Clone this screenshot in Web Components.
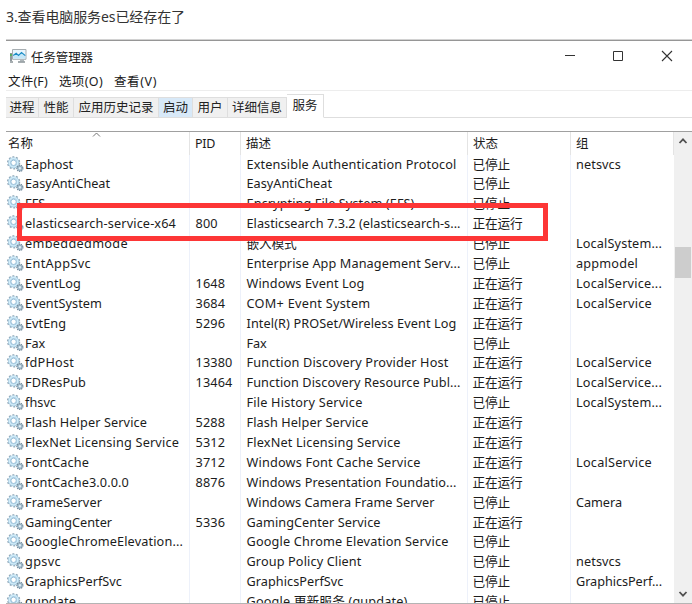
<!DOCTYPE html>
<html lang="zh-CN">
<head>
<meta charset="utf-8">
<title>任务管理器</title>
<style>
html,body{margin:0;height:604px;overflow:hidden;background:#fff}
body{font-family:"Noto Sans","Noto Sans CJK SC",sans-serif;font-size:12.7px;color:#1c1c1c}
</style>
</head>
<body>
<task-page></task-page>
<script>
const define = (name, html, setup) => {
  customElements.define(name, class extends HTMLElement {
    constructor() {
      super();
      this.attachShadow({ mode: 'open' }).innerHTML = html;
    }
    connectedCallback() { if (setup) setup(this, this.shadowRoot); }
  });
};

/* A single line of text spaced out to the width given in its w attribute. */
define('fit-text', `<style>:host{display:inline-block;white-space:pre}span{display:inline-block;white-space:pre}</style><span></span>`, (el, root) => {
  const s = root.querySelector('span'), t = el.getAttribute('text'), w = +el.getAttribute('w');
  s.textContent = t;
  if (w && t.length) {
    const d = (w - s.getBoundingClientRect().width) / t.length;
    s.style.letterSpacing = d.toFixed(3) + 'px';
  }
});

define('gear-icon', `<style>:host{display:block;width:18px;height:18px;flex:none;padding-top:1px}svg{display:block}</style>
<svg width="18" height="18" viewBox="0 0 18 18" fill="none">
<circle cx="6.6" cy="6.8" r="5.9" stroke="#91a8b8" stroke-width="1.5" stroke-dasharray="1.9 1.8"/>
<circle cx="6.6" cy="6.8" r="4.3" stroke="#a3c6dc" stroke-width="2.6"/>
<circle cx="6.6" cy="6.8" r="4.2" stroke="#d0ecf9" stroke-width="1.5"/>
<circle cx="6.6" cy="6.8" r="2.7" fill="#fff" stroke="#7eb0d0" stroke-width=".8"/>
<circle cx="12.9" cy="12.3" r="2.9" stroke="#71899b" stroke-width="1.5" stroke-dasharray="1.3 .7"/>
<circle cx="12.9" cy="12.3" r="2.1" fill="#c4dbe8" stroke="#8fabbd" stroke-width="1.1"/>
<circle cx="12.9" cy="12.3" r=".8" fill="#f4fafd"/>
</svg>`);

define('title-bar', `<style>
:host{display:flex;height:30px;align-items:center;padding-left:4px;font-size:12.5px}
.app{margin-right:4px}fit-text{flex:1}svg{display:block}
.b{width:48.5px;display:flex;justify-content:center;position:relative;left:-1px}
</style>
<svg class="app" width="17" height="16" viewBox="0 0 17 16" fill="none">
<path d="M0 5h2v8H0z" fill="#8f999d"/><path d="M.2 6h1.5v2H.2z" fill="#45b749"/>
<path d="M2.5 1.5h13.5v9.8H2.5z" fill="#e8f6fd" stroke="#a6adb1"/>
<path d="M3.2 7.6l3-2 2.3 2 3-3 3.8 3.2v2.8H3.2z" fill="#c4e7f8"/>
<path d="M3.2 7.5L6.2 5.3l2.3 2.2 3-3 3.8 3.2" stroke="#198bc5" stroke-width="1.1"/>
<path d="M10 11.5h4v2h-4z" fill="#afb7ba"/><path d="M8 14h7M0 14h3" stroke="#8b9498" stroke-width="1.3"/>
</svg><fit-text text="任务管理器" w="62"></fit-text>
<div class="b"><svg width="12" height="12"><path d="M1 5.5h10" stroke="#333" fill="none"/></svg></div>
<div class="b"><svg width="12" height="12"><path d="M1.5 1.5h9v9h-9z" stroke="#333" fill="none"/></svg></div>
<div class="b"><svg width="12" height="12"><path d="M1 1l10 10M11 1L1 11" stroke="#333" stroke-width="1.1" fill="none"/></svg></div>`);

define('menu-bar', `<style>:host{display:flex;height:19px;line-height:21px;padding-left:2px;gap:11px;font-size:12.5px;border-bottom:1px solid #ededed}</style>
<fit-text text="文件(F)" w="40"></fit-text><fit-text text="选项(O)" w="44"></fit-text><fit-text text="查看(V)" w="43"></fit-text>`);

define('tab-item', `<style>
:host{display:block;box-sizing:border-box;height:21px;line-height:20px;background:#f0f0f0;border:1px solid #dedede;border-left:0;text-align:center;color:#222}
:host([hot]){background:#d8e9f8}
:host([on]){height:24px;background:#fff;border-bottom-color:#fff;line-height:21px}
</style><slot></slot>`);

define('tab-strip', `<style>:host{display:flex;height:25px;margin-top:2px;align-items:flex-end;font-size:12.5px}
.rest{flex:1;height:1px;background:#dedede}</style>
${[['进程',33,25],['性能',35,25],['应用历史记录',85,75],['启动',34,25,'hot'],['用户',35,25],['详细信息',59,50],['服务',37,25,'on']].map(([t,w,f,a])=>`<tab-item ${a||''} style="width:${w}px"><fit-text text="${t}" w="${f}"></fit-text></tab-item>`).join('')}<div class="rest"></div>`);

define('service-row', `<style>
:host{display:grid;grid-template-columns:184px 51px 227px 103px 103px;height:19.905px;line-height:19.9px;color:#1c1c1c}
div{display:flex;padding-left:5.5px;overflow:visible;white-space:nowrap;align-items:flex-start}
.n{padding-left:1px}.s{padding-left:4.5px}.g{padding-left:5px}
</style><div class="n"><gear-icon></gear-icon></div><div class="p"></div><div class="d"></div><div class="s"></div><div class="g"></div>`, (el, root) => {
  const [n, nw, p, d, dw, st, g, gw] = el.data;
  const put = (q, t, w) => {
    if (!t) return;
    const f = document.createElement('fit-text');
    f.setAttribute('text', t); f.setAttribute('w', w);
    root.querySelector(q).append(f);
  };
  put('.n', n, nw); put('.p', p, p.length * 7.4); put('.d', d, dw);
  put('.s', st ? '正在运行' : '已停止', st ? 50 : 37.5); put('.g', g, gw);
});

define('list-header', `<style>
:host{display:grid;grid-template-columns:184px 51px 227px 103px 103px;height:22.5px;line-height:23px;font-size:12.5px;position:relative}
div{box-sizing:border-box;padding-left:5px;border-right:1px solid #e4e4e4}div.first{padding-left:2px}
svg{position:absolute;left:86px;top:0}
</style><div class="first"><fit-text text="名称" w="25"></fit-text></div><div><fit-text text="PID" w="20"></fit-text></div><div><fit-text text="描述" w="25"></fit-text></div><div><fit-text text="状态" w="25"></fit-text></div><div><fit-text text="组" w="12.5"></fit-text></div>
<svg width="9" height="6"><path d="M1 4.5L4.5 1 8 4.5" stroke="#777" fill="none"/></svg>`);

define('scroll-bar', `<style>:host{display:flex;flex-direction:column;width:18px;background:#f0f0f0;align-items:center}
i{width:16px;height:31px;background:#cdcdcd;margin-top:98px;margin-bottom:auto}svg{flex:none}</style>
<svg width="10" height="17"><path d="M1.5 11L5 7.3 8.5 11" stroke="#505050" stroke-width="1.8" fill="none"/></svg><i></i>
<svg width="10" height="17"><path d="M1.5 6L5 9.7 8.5 6" stroke="#505050" stroke-width="1.8" fill="none"/></svg>`);

define('service-list', `<style>
:host{display:flex;margin-top:13px;border-top:1px solid #a0a0a0;border-bottom:1px solid #b4b4b4;box-sizing:border-box;height:473px;overflow:hidden}
.t{width:668px;overflow:hidden;background:linear-gradient(#edf1fa,#edf1fa) 183px 0/1px 100% no-repeat,linear-gradient(#edf1fa,#edf1fa) 234px 0/1px 100% no-repeat,linear-gradient(#edf1fa,#edf1fa) 461px 0/1px 100% no-repeat,linear-gradient(#edf1fa,#edf1fa) 564px 0/1px 100% no-repeat}
</style><div class="t"><list-header></list-header></div><scroll-bar></scroll-bar>`, (el, root) => {
  const rows = [
    ['Eaphost',48,'','Extensible Authentication Protocol',210,0,'netsvcs',45],
    ['EasyAntiCheat',85,'','EasyAntiCheat',85.5,0,'',0],
    ['EFS',20,'','Encrypting File System (EFS)',168,0,'',0],
    ['elasticsearch-service-x64',151,'800','Elasticsearch 7.3.2 (elasticsearch-s...',214,1,'',0],
    ['embeddedmode',103,'','嵌入模式',50,0,'LocalSystem...',86],
    ['EntAppSvc',66,'','Enterprise App Management Serv...',214,0,'appmodel',62],
    ['EventLog',56,'1648','Windows Event Log',118,1,'LocalService...',86],
    ['EventSystem',77,'3684','COM+ Event System',124,1,'LocalService',76],
    ['EvtEng',41,'5296','Intel(R) PROSet/Wireless Event Log',210,1,'',0],
    ['Fax',20,'','Fax',20,0,'',0],
    ['fdPHost',49,'13380','Function Discovery Provider Host',202,1,'LocalService',76],
    ['FDResPub',61,'13464','Function Discovery Resource Publ...',214,1,'LocalService...',86],
    ['fhsvc',31,'','File History Service',116,0,'LocalSystem...',86],
    ['Flash Helper Service',122,'5288','Flash Helper Service',122,1,'',0],
    ['FlexNet Licensing Service',154,'5312','FlexNet Licensing Service',154,1,'',0],
    ['FontCache',64,'3712','Windows Font Cache Service',174,1,'LocalService',76],
    ['FontCache3.0.0.0',104,'8876','Windows Presentation Foundatio...',210,1,'',0],
    ['FrameServer',77,'','Windows Camera Frame Server',188,0,'Camera',46],
    ['GamingCenter',87,'5336','GamingCenter Service',134,1,'',0],
    ['GoogleChromeElevation...',158,'','Google Chrome Elevation Service',202,0,'',0],
    ['gpsvc',36,'','Group Policy Client',115,0,'netsvcs',45],
    ['GraphicsPerfSvc',97,'','GraphicsPerfSvc',97,0,'GraphicsPerf...',86],
    ['gupdate',51,'','Google 更新服务 (gupdate)',161,0,'',0]
  ];
  for (const r of rows) {
    const e = document.createElement('service-row');
    e.data = r;
    root.querySelector('.t').append(e);
  }
});

define('task-window', `<style>:host{display:block;margin-left:6px;border-top:1px solid #d2d2d2}hr{margin:0;border:0;height:1px;background:#969696}</style>
<hr><title-bar></title-bar><menu-bar></menu-bar><tab-strip></tab-strip><service-list></service-list>`);

/* Red frame laid over the highlighted service. */
define('red-frame', `<style>:host{position:absolute;box-sizing:border-box;left:17px;top:203px;width:531px;height:38px;border:5px solid #fd3636}</style>`);

define('task-page', `<style>:host{display:block;position:relative;width:692px;height:604px;overflow:hidden}
h1{margin:0;height:39px;line-height:34px;padding-left:6px;font-size:14px;font-weight:400;color:#333;box-sizing:border-box}</style>
<h1><fit-text text="3.查看电脑服务es已经存在了" w="179"></fit-text></h1><task-window></task-window><red-frame></red-frame>`);
</script>
</body>
</html>
